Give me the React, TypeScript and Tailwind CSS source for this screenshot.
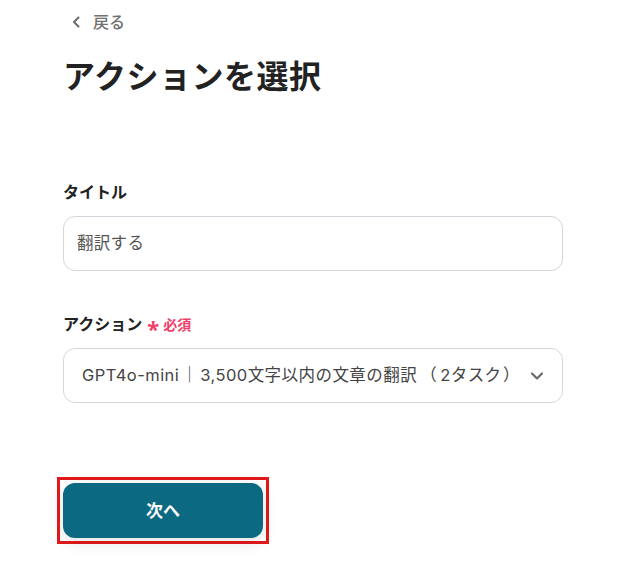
const font = { fontFamily: '"Noto Sans", "Noto Sans CJK JP", sans-serif' };
const selectFont = { fontFamily: 'Inter, "Noto Sans CJK JP", sans-serif' };

export default function App() {
  return (
    <div className="min-h-[581px] bg-white text-[#222]" style={font}>
      <div className="w-[500px] ml-[63px] pt-[10px]">
        {/* Back link */}
        <button className="flex items-center gap-[12px] text-[16px] text-[#707070] font-medium ml-[8px] h-[24px]">
          <svg width="10" height="12" viewBox="0 0 10 12" fill="none">
            <path d="M7.5 1.5 L3 6 L7.5 10.5" stroke="#6b6b6b" strokeWidth="2" strokeLinecap="round" strokeLinejoin="round" />
          </svg>
          戻る
        </button>

        {/* Title */}
        <h1 className="mt-[20px] text-[32px] leading-[44px] font-bold tracking-[0.5px] text-[#222]">
          アクションを選択
        </h1>

        {/* Title field */}
        <div className="mt-[82px]">
          <label className="block text-[16px] font-bold leading-[24px] text-[#222]">タイトル</label>
          <div className="mt-[12px] h-[55px] rounded-[12px] border border-[#d4d7dd] flex items-center px-[13px] text-[16.5px] tracking-[0.3px] text-[#555]">
            翻訳する
          </div>
        </div>

        {/* Action field */}
        <div className="mt-[41px]">
          <div className="flex items-center h-[24px]">
            <span className="text-[16px] font-bold text-[#222]">アクション</span>
            <span className="ml-[5px] h-[24px] leading-[32px] text-[#f0406a] text-[22px] font-bold">*</span>
            <span className="ml-[4px] text-[#f0406a] text-[14px] font-bold">必須</span>
          </div>
          <div
            className="mt-[12px] h-[55px] rounded-[12px] border border-[#d4d7dd] flex items-center justify-between pl-[18px] pr-[18px] text-[16.5px] tracking-[0.45px] text-[#444]"
            style={selectFont}
          >
            <span className="whitespace-nowrap">
              GPT4o-mini<span className="inline-block w-[21px] text-center">｜</span>3,500文字以内の文章の翻訳<span className="inline-block w-[23px] text-center">（</span>2タスク<span className="inline-block w-[20px] text-center">）</span>
            </span>
            <svg width="14" height="10" viewBox="0 0 14 10" fill="none">
              <path d="M2 2.5 L7 7.5 L12 2.5" stroke="#6b6b6b" strokeWidth="2.2" strokeLinecap="round" strokeLinejoin="round" />
            </svg>
          </div>
        </div>

        {/* Next button with annotation frame */}
        <div className="mt-[74px] -ml-[6px] inline-block border-[3px] border-[#e3191b] p-[3px]">
          <button className="w-[200px] h-[55px] rounded-[12px] bg-[#0b6982] text-white text-[17px] font-bold shadow-[0_4px_16px_rgba(0,0,0,0.12)]">
            次へ
          </button>
        </div>
      </div>
    </div>
  );
}
